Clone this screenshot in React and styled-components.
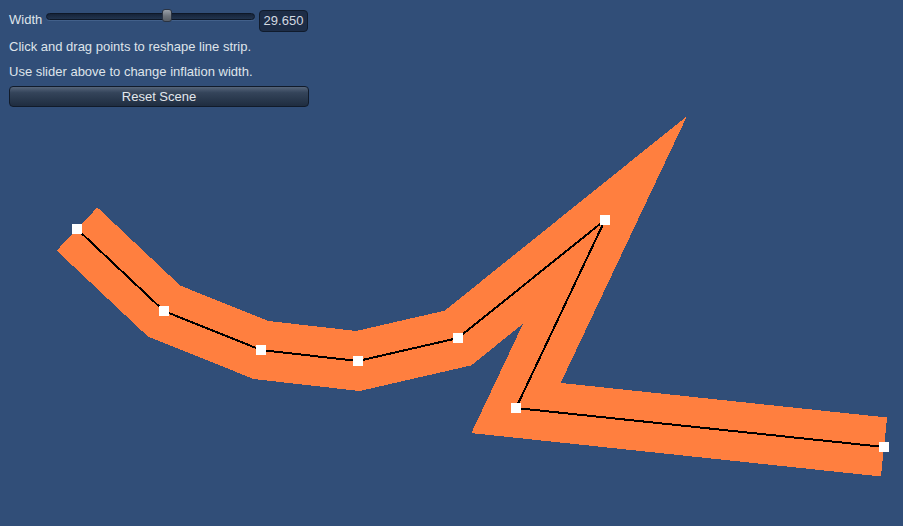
import React from "react";
import styled, { createGlobalStyle } from "styled-components";

const Global = createGlobalStyle`
  html, body { margin: 0; padding: 0; background: #314e78; }
  body { font-family: "Liberation Sans", Arial, sans-serif; }
`;

const Page = styled.div`
  position: relative;
  width: 903px;
  height: 526px;
  overflow: hidden;
  background: #314e78;
`;

const Canvas = styled.svg`
  position: absolute;
  inset: 0;
  display: block;
`;

const Panel = styled.div`
  position: relative;
  z-index: 1;
  width: 300px;
  padding: 9px 0 0 9px;
  display: flex;
  flex-direction: column;
  color: #dfe4ea;
  font-size: 13px;
`;

const SliderRow = styled.div`
  display: flex;
  align-items: center;
  height: 23px;
`;

const Label = styled.span`
  width: 37px;
  line-height: 15px;
  margin-top: -2px;
`;

const Track = styled.div`
  position: relative;
  width: 207px;
  height: 5px;
  margin-top: -9px;
  border-radius: 4px;
  background: linear-gradient(#152338, #22344f);
  border: 1px solid #0e1828;
  box-shadow: 0 1px 0 rgba(120, 150, 190, 0.25);
`;

const Thumb = styled.div`
  position: absolute;
  top: -5px;
  width: 10px;
  height: 13px;
  border-radius: 3px;
  background: linear-gradient(#9aa0a8, #6d737b 55%, #585e66);
  border: 1px solid #2a3342;
  box-sizing: border-box;
`;

const ValueBox = styled.div`
  margin-left: 4px;
  width: 49px;
  height: 22px;
  box-sizing: border-box;
  border-radius: 4px;
  background: #1d2d47;
  border: 1px solid #101b2c;
  display: flex;
  align-items: center;
  justify-content: center;
  font-size: 13px;
  color: #d3d9e1;
`;

const Info = styled.div`
  height: 25px;
  line-height: 25px;
  margin-top: ${(p) => p.$top || 0}px;
`;

const Button = styled.button`
  margin-top: 2px;
  width: 300px;
  height: 21px;
  padding: 0;
  border-radius: 4px;
  border: 1px solid #111b2a;
  background: linear-gradient(#56657a 0%, #34445a 30%, #1f2d40 100%);
  color: #e3e7ec;
  font-family: "Liberation Sans", Arial, sans-serif;
  font-size: 13px;
  line-height: 19px;
  cursor: pointer;
`;

const POINTS = [
  [77, 229],
  [164, 311],
  [261, 350],
  [358, 361],
  [458, 338],
  [605, 220],
  [516, 408],
  [884, 447],
];
const W = 29.65;

function buildQuads(pts, w) {
  const normals = [];
  for (let i = 0; i < pts.length - 1; i++) {
    const dx = pts[i + 1][0] - pts[i][0];
    const dy = pts[i + 1][1] - pts[i][1];
    const len = Math.hypot(dx, dy);
    normals.push([(-dy / len) * w, (dx / len) * w]);
  }
  const offs = pts.map((_, j) => {
    if (j === 0) return normals[0];
    if (j === pts.length - 1) return normals[normals.length - 1];
    const a = normals[j - 1];
    const b = normals[j];
    const k = (w * w) / (w * w + a[0] * b[0] + a[1] * b[1]);
    return [(a[0] + b[0]) * k, (a[1] + b[1]) * k];
  });
  const L = pts.map((p, j) => [p[0] + offs[j][0], p[1] + offs[j][1]]);
  const R = pts.map((p, j) => [p[0] - offs[j][0], p[1] - offs[j][1]]);
  const quads = [];
  for (let i = 0; i < pts.length - 1; i++) {
    quads.push([L[i], L[i + 1], R[i + 1], R[i]]);
  }
  return quads;
}

export default function App() {
  const quads = buildQuads(POINTS, W);
  const ratio = 0.58;
  return (
    <Page>
      <Global />
      <Canvas width="903" height="526" viewBox="0 0 903 526" shapeRendering="crispEdges">
        {quads.map((q, i) => (
          <polygon
            key={i}
            points={q.map((p) => p.join(",")).join(" ")}
            fill="#ff7f3f"
          />
        ))}
        <polyline
          points={POINTS.map((p) => p.join(",")).join(" ")}
          fill="none"
          stroke="#000"
          strokeWidth="2"
          strokeLinejoin="miter"
        />
        {POINTS.map((p, i) => (
          <rect key={i} x={p[0] - 5} y={p[1] - 5} width="10" height="10" fill="#fff" />
        ))}
      </Canvas>
      <Panel>
        <SliderRow>
          <Label>Width</Label>
          <Track>
            <Thumb style={{ left: `${ratio * 207 - 5}px` }} />
          </Track>
          <ValueBox>29.650</ValueBox>
        </SliderRow>
        <Info $top={2}>Click and drag points to reshape line strip.</Info>
        <Info>Use slider above to change inflation width.</Info>
        <Button>Reset Scene</Button>
      </Panel>
    </Page>
  );
}
